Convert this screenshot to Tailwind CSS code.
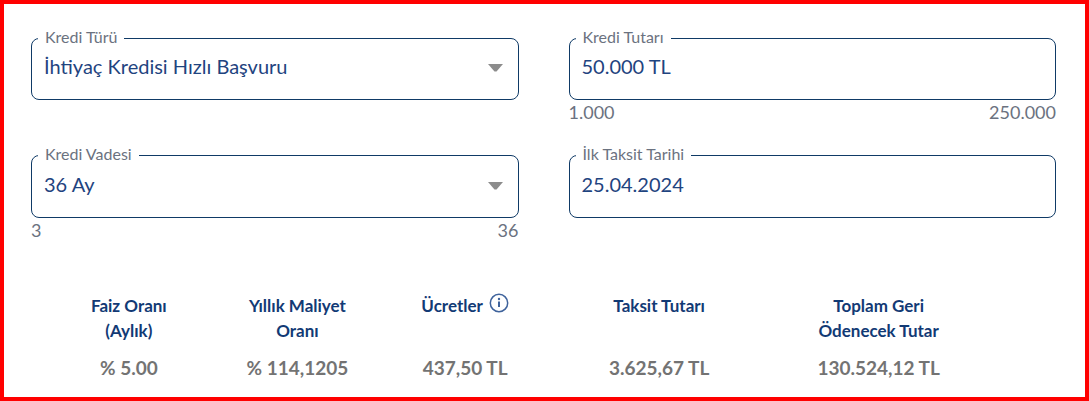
<!DOCTYPE html>
<html lang="tr">
<head>
<meta charset="utf-8">
<meta name="viewport" content="width=device-width, initial-scale=1">
<title>Kredi Hesaplama</title>
<script src="https://cdn.jsdelivr.net/npm/@tailwindcss/browser@4"></script>
</head>
<body class="min-h-screen border-4 border-[#ff0000] bg-white font-['Lato','Open_Sans',sans-serif]">
<form class="grid grid-cols-2 gap-x-[50px] gap-y-[23px] pt-[26px] pr-[29px] pl-[27px] text-[#6b7280]">
  <div>
    <fieldset class="relative rounded-lg border border-[#0f3a66] px-[12px]">
      <legend class="-ml-[6px] h-[17px] px-[7px] text-base leading-[13px]"><label for="tur">Kredi Türü</label></legend>
      <select id="tur" class="block h-[52px] w-full appearance-none bg-transparent pb-[14px] text-[20px] text-[#1f4480] outline-none"><option>İhtiyaç Kredisi Hızlı Başvuru</option></select>
      <svg class="pointer-events-none absolute right-[15px] bottom-[27px] h-[8px] w-[15px]" viewBox="0 0 15 8" fill="#8c8c8c" aria-hidden="true"><path d="M0 0h15L8.500 7.500h-2z"/></svg>
    </fieldset>
  </div>
  <div>
    <fieldset class="rounded-lg border border-[#0f3a66] px-[12px]">
      <legend class="-ml-[6px] h-[17px] px-[7px] text-base leading-[13px]"><label for="tutar">Kredi Tutarı</label></legend>
      <input id="tutar" type="text" value="50.000 TL" class="block h-[52px] w-full bg-transparent pb-[14px] text-[20px] text-[#1f4480] outline-none">
    </fieldset>
    <div class="flex justify-between text-lg leading-6"><span>1.000</span><span>250.000</span></div>
  </div>
  <div>
    <fieldset class="relative rounded-lg border border-[#0f3a66] px-[12px]">
      <legend class="-ml-[6px] h-[17px] px-[7px] text-base leading-[13px]"><label for="vade">Kredi Vadesi</label></legend>
      <select id="vade" class="block h-[53px] w-full appearance-none bg-transparent pb-[14px] text-[20px] text-[#1f4480] outline-none"><option>36 Ay</option></select>
      <svg class="pointer-events-none absolute right-[15px] bottom-[27px] h-[8px] w-[15px]" viewBox="0 0 15 8" fill="#8c8c8c" aria-hidden="true"><path d="M0 0h15L8.500 7.500h-2z"/></svg>
    </fieldset>
    <div class="flex justify-between text-lg leading-6"><span>3</span><span>36</span></div>
  </div>
  <div>
    <fieldset class="rounded-lg border border-[#0f3a66] px-[12px]">
      <legend class="-ml-[6px] h-[17px] px-[7px] text-base leading-[13px]"><label for="tarih">İlk Taksit Tarihi</label></legend>
      <input id="tarih" type="text" value="25.04.2024" class="block h-[53px] w-full bg-transparent pb-[14px] text-[20px] text-[#1f4480] outline-none">
    </fieldset>
  </div>
</form>
<div class="pt-[51px] pr-[98px] pl-[41px]">
  <table class="w-full table-fixed text-center">
    <thead>
      <tr class="align-top text-[17px] leading-[25px] text-[#123a75]">
        <th scope="col" class="w-[17.8%] font-bold">Faiz Oranı<br>(Aylık)</th>
        <th scope="col" class="w-[18%] font-bold">Yıllık Maliyet<br>Oranı</th>
        <th scope="col" class="w-[17.6%] font-bold">
          <span class="inline-flex gap-[6px]">Ücretler
            <button type="button" aria-label="Ücretler hakkında bilgi" class="h-[20px] w-[20px]"><svg viewBox="0 0 20 20" class="h-[20px] w-[20px]" fill="none" stroke="#3f639c" aria-hidden="true"><circle cx="10" cy="10" r="8.700" stroke-width="1.500"/><path d="M10 8.500v5.500" stroke-width="2"/><circle cx="10" cy="6" r="1.200" fill="#3f639c" stroke="none"/></svg></button>
          </span>
        </th>
        <th scope="col" class="w-[23.6%] font-bold">Taksit Tutarı</th>
        <th scope="col" class="w-[23%] font-bold">Toplam Geri<br>Ödenecek Tutar</th>
      </tr>
    </thead>
    <tbody>
      <tr class="text-[19px] leading-[26px] font-bold text-[#737373]">
        <td class="pt-3">% 5.00</td>
        <td class="pt-3">% 114,1205</td>
        <td class="pt-3">437,50 TL</td>
        <td class="pt-3">3.625,67 TL</td>
        <td class="pt-3">130.524,12 TL</td>
      </tr>
    </tbody>
  </table>
</div>
</body>
</html>
